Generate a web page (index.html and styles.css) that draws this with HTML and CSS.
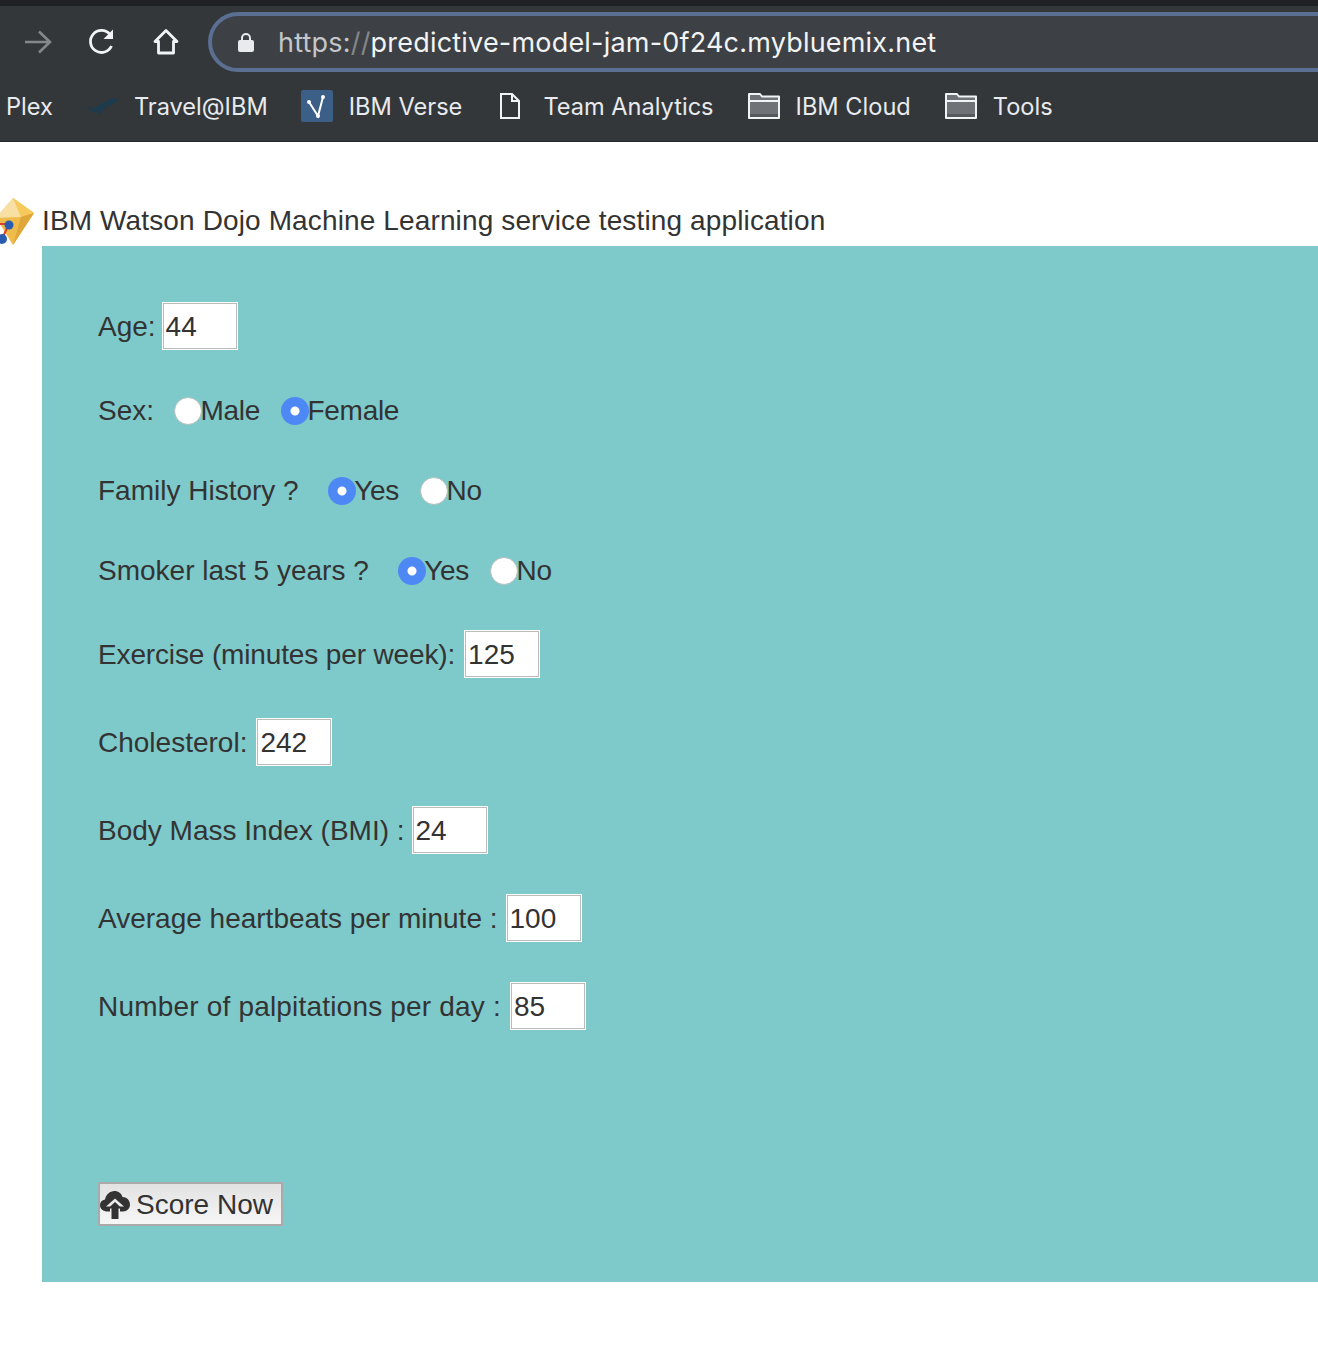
FILE: index.html
```html
<!DOCTYPE html>
<html>

<head>
	<meta charset="utf-8" />
	<title>IBM Watson Dojo</title>
	<link rel="stylesheet" href="styles.css">
</head>

<body>
	<div class="chrome">
		<div class="toolbar">
			<svg class="tool-icon back" width="32" height="32" viewBox="0 0 32 32"><path d="M3 16H28M17 5.500L28 16L17 26.500" fill="none" stroke="#85888b" stroke-width="2.600" /></svg>
			<svg class="tool-icon reload" width="32" height="32" viewBox="0 0 32 32"><path d="M25.500 20a11 11 0 1 1-1.500-11.500" fill="none" stroke="#f1f3f4" stroke-width="2.800" /><path d="M27 3.500V13H17.500Z" fill="#f1f3f4" /></svg>
			<svg class="tool-icon home" width="32" height="32" viewBox="0 0 32 32"><path d="M16 4.500L27 15.500H23.500V27H8.500V15.500H5Z" fill="none" stroke="#f1f3f4" stroke-width="2.800" stroke-linejoin="round" /></svg>
			<div class="omnibox">
				<svg class="lock" width="16" height="20" viewBox="0 0 16 20"><path d="M4 9V6a4 4 0 0 1 8 0V9" fill="none" stroke="#e8eaed" stroke-width="2" /><rect y="8" width="16" height="12" rx="2" fill="#e8eaed" /></svg>
				<span class="url"><span class="scheme">https:</span><span class="slashes">//</span>predictive-model-jam-0f24c.mybluemix.net</span>
			</div>
		</div>
		<div class="bookmarks">
			<span class="bookmark plex">Plex</span>
			<span class="bookmark">
				<svg width="32" height="18" viewBox="0 0 32 18"><path d="M1 10L3 9.500L7 12L22 3C26 1 31 .5 32 2C32 4 28 6.500 24 8.500L19 11L14 17L10.500 18L13 13.500L7 15.500Z" fill="#1c3b4c" /></svg>
				Travel@IBM
			</span>
			<span class="bookmark verse">
				<svg width="32" height="32" viewBox="0 0 32 32"><rect width="32" height="32" rx="2" fill="#3b5f86" /><path d="M8 12L17 26L22 7" fill="none" stroke="#fff" stroke-width="2" /><circle cx="8" cy="12" r="2" fill="#fff" /><circle cx="17" cy="26" r="2" fill="#fff" /><circle cx="22" cy="7" r="2" fill="#fff" /></svg>
				IBM Verse
			</span>
			<span class="bookmark doc">
				<svg width="20" height="26" viewBox="0 0 20 26"><path d="M1 1H12L19 8V25H1Z" fill="none" stroke="#f1f3f4" stroke-width="2" /><path d="M12 1V8H19" fill="none" stroke="#f1f3f4" stroke-width="2" /></svg>
				Team Analytics
			</span>
			<span class="bookmark">
				<svg width="32" height="26" viewBox="0 0 32 26"><path d="M1 1H12L14 3.500H31V25H1Z" fill="#6f7377" stroke="#f1f3f4" stroke-width="2" stroke-linejoin="round" /><path d="M1 8H31" stroke="#f1f3f4" stroke-width="2" /><path d="M2 22.500H30" stroke="#55595d" stroke-width="3" /></svg>
				IBM Cloud
			</span>
			<span class="bookmark">
				<svg width="32" height="26" viewBox="0 0 32 26"><path d="M1 1H12L14 3.500H31V25H1Z" fill="#6f7377" stroke="#f1f3f4" stroke-width="2" stroke-linejoin="round" /><path d="M1 8H31" stroke="#f1f3f4" stroke-width="2" /><path d="M2 22.500H30" stroke="#55595d" stroke-width="3" /></svg>
				Tools
			</span>
		</div>
	</div>

	<div class="page">
		<h1 class="title">
			<svg class="logo" width="40" height="48" viewBox="0 0 40 48">
				<path d="M17 0L38 15L17 47L0 20Z" fill="#efbb4a" />
				<path d="M17 0L38 15L25 19Z" fill="#f6c95a" />
				<path d="M38 15L17 47L25 19Z" fill="#dfa73a" />
				<path d="M17 0L0 20L25 19Z" fill="#f8e0a4" />
				<path d="M0 26H13L6 41" fill="none" stroke="#d8402c" stroke-width="2" />
				<circle cx="13" cy="27" r="4.500" fill="#2a5db0" />
				<circle cx="6" cy="41" r="5" fill="#2a5db0" />
			</svg>
			IBM Watson Dojo Machine Learning service testing application
		</h1>
		<form class="panel">
			<div class="rows">
				<div class="row">
					<label class="gap-6" for="age">Age:</label>
					<input class="field" id="age" type="text" value="44">
				</div>
				<div class="row choice">
					<span class="ask sex">Sex:</span>
					<input class="radio" type="radio" name="sex"><span class="opt">Male</span>
					<input class="radio" type="radio" name="sex" checked><span class="opt">Female</span>
				</div>
				<div class="row choice">
					<span class="ask">Family History ?</span>
					<input class="radio" type="radio" name="family" checked><span class="opt">Yes</span>
					<input class="radio" type="radio" name="family"><span class="opt">No</span>
				</div>
				<div class="row choice">
					<span class="ask">Smoker last 5 years ?</span>
					<input class="radio" type="radio" name="smoker" checked><span class="opt">Yes</span>
					<input class="radio" type="radio" name="smoker"><span class="opt">No</span>
				</div>
				<div class="row">
					<label class="tight" for="exercise">Exercise (minutes per week):</label>
					<input class="field" id="exercise" type="text" value="125">
				</div>
				<div class="row">
					<label for="chol">Cholesterol:</label>
					<input class="field" id="chol" type="text" value="242">
				</div>
				<div class="row">
					<label class="gap-7" for="bmi">Body Mass Index (BMI) :</label>
					<input class="field" id="bmi" type="text" value="24">
				</div>
				<div class="row">
					<label class="gap-8" for="heart">Average heartbeats per minute :</label>
					<input class="field" id="heart" type="text" value="100">
				</div>
				<div class="row">
					<label class="loose" for="palp">Number of palpitations per day :</label>
					<input class="field" id="palp" type="text" value="85">
				</div>
			</div>
			<button class="score" type="button">
				<svg width="30" height="28" viewBox="0 0 30 28"><path d="M8 20.500C3 20.500 0 18 0 14C0 11 2 9 5 8.500C6 3.500 10 0 14.500 0C18.500 0 21.500 2.500 22.500 6C26.500 6 30 9 30 13.500C30 17.500 27 20.500 23 20.500H20V15.500H24L15 7.500L6 15.500H10V20.500Z" fill="#333" /><path d="M15 11L22 17.500H18.500V28H11.500V17.500H8Z" fill="#333" /></svg>
				Score Now
			</button>
		</form>
	</div>
</body>

</html>
```

FILE: styles.css
```css
* {
	margin: 0px;
	padding: 0px;
	box-sizing: border-box;
}

html,
body {
	background: #fff;
	overflow: hidden;
}

body {
	height: 1356px;
	width: 1318px;
	font-family: "Liberation Sans", Arial, sans-serif;
	color: #333;
}

/* browser bar */
.chrome {
	height: 142px;
	border-top: 6px solid #202124;
	border-bottom: 1px solid #25282b;
	background-color: #33373a;
	font-family: Inter, "Noto Sans", sans-serif;
	color: #e8eaed;
	overflow: hidden;
}

.toolbar {
	display: flex;
	align-items: center;
	height: 72px;
	padding-left: 22px;
	overflow: hidden;
}

.tool-icon {
	flex: none;
}

.back {
	margin-right: 32px;
}

.reload {
	margin-right: 32px;
}

.home {
	margin-right: 26px;
}

.omnibox {
	flex: 1 0 1130px;
	display: flex;
	align-items: center;
	height: 60px;
	margin-right: -40px;
	padding-left: 26px;
	background-color: #3d4044;
	border: 4px solid #5a6f92;
	border-radius: 30px;
}

.url {
	margin-left: 24px;
	font-size: 27px;
	letter-spacing: .2px;
	color: #f1f3f4;
	white-space: nowrap;
}

.scheme {
	color: #c4c7ca;
}

.slashes {
	color: #85888b;
}

.bookmarks {
	display: flex;
	align-items: center;
	gap: 34px;
	height: 56px;
	padding-left: 6px;
	font-size: 23.600px;
}

.bookmark {
	display: flex;
	align-items: center;
	gap: 16px;
	white-space: nowrap;
}

.plex {
	margin-right: -1px;
}

.verse {
	margin-left: -1px;
}

.doc {
	gap: 23px;
	margin-left: 4px;
}

/* page */
.title {
	display: flex;
	align-items: flex-end;
	height: 104px;
	padding-left: 42px;
	padding-bottom: 9px;
	position: relative;
	font-size: 28px;
	font-weight: normal;
	letter-spacing: .13px;
	color: #333;
}

.logo {
	position: absolute;
	left: -4px;
	bottom: 0px;
}

.panel {
	margin-left: 42px;
	height: 1036px;
	padding: 56px;
	background-color: #7ec9ca;
	font-size: 28px;
}

.rows {
	display: flex;
	flex-direction: column;
	gap: 40px;
}

.row {
	display: flex;
	align-items: center;
	min-height: 40px;
}

.row label {
	margin-right: 9px;
	padding-top: 2px;
	white-space: nowrap;
}

.row label.gap-6 {
	margin-right: 6px;
}

.row label.gap-7 {
	margin-right: 7px;
}

.row label.gap-8 {
	margin-right: 8px;
}

.row label.tight {
	letter-spacing: -.14px;
}

.row label.loose {
	letter-spacing: .19px;
}

.field {
	width: 76px;
	height: 48px;
	padding-left: 2px;
	padding-top: 2px;
	border: 2px solid #fff;
	outline: 1px solid #bbb;
	outline-offset: -2px;
	background: #fff;
	font: 28px "Liberation Sans", Arial, sans-serif;
	color: #333;
}

.ask {
	margin-right: 29px;
	padding-top: 2px;
	white-space: nowrap;
}

.ask.sex {
	margin-right: 20px;
}

.radio {
	appearance: none;
	-webkit-appearance: none;
	flex: none;
	position: relative;
	top: 1px;
	width: 28px;
	height: 28px;
	margin-right: -1.500px;
	border-radius: 50%;
	background: #fff;
	border: 1px solid #b4bcbc;
}

.radio:checked {
	background: radial-gradient(circle, #fff 0, #fff 4px, #4d88f5 5px);
	border: none;
}

.opt {
	margin-right: 21px;
	padding-top: 2px;
	letter-spacing: -.3px;
}

.score {
	display: flex;
	align-items: center;
	gap: 6px;
	width: 185px;
	height: 44px;
	margin-top: 152px;
	padding-top: 2px;
	border: 2px solid #aaa;
	background: linear-gradient(to bottom, #e2e2e2, #f6f6f6);
	font: 28px "Liberation Sans", Arial, sans-serif;
	color: #333;
	white-space: nowrap;
}
```
